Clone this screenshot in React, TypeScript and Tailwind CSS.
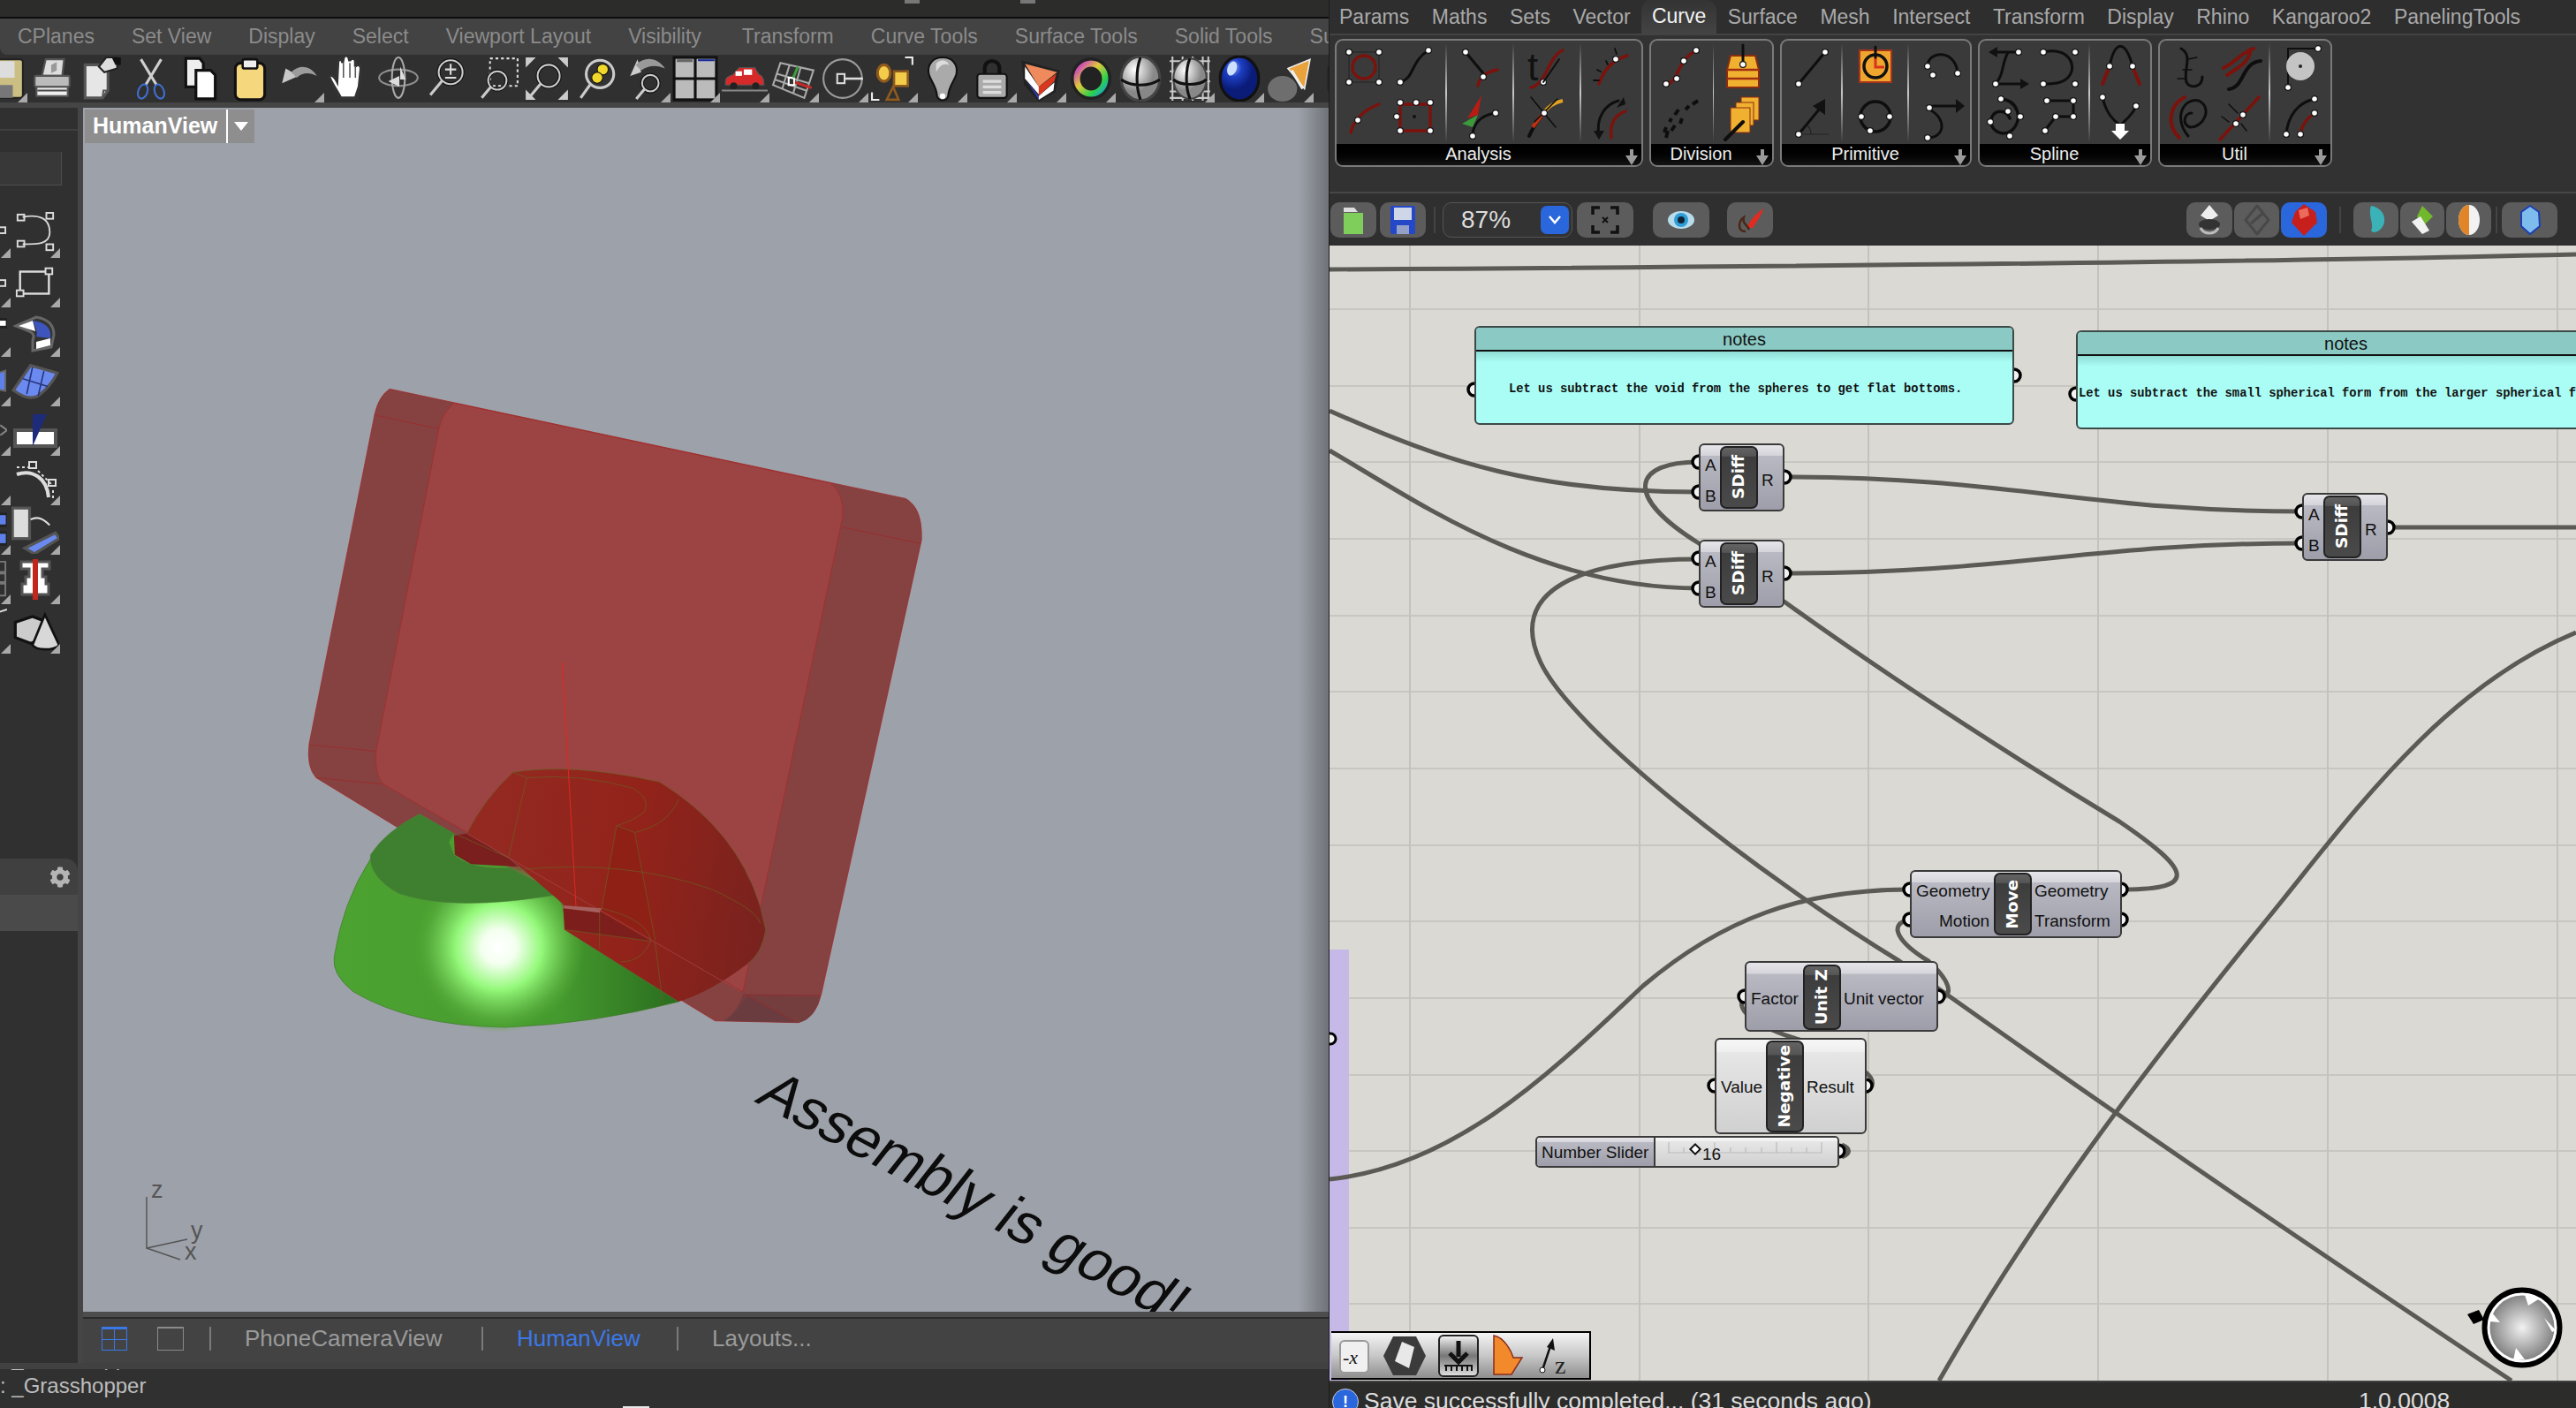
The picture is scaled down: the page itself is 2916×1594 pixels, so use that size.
import React from "react";
import { FaCog } from "react-icons/fa";

const sans = "font-['Liberation_Sans',Arial,sans-serif]";

const Tri = () => (
  <span className="absolute right-0 bottom-0 h-[11px] w-[11px] bg-[#a9a9a9] [clip-path:polygon(100%_0,100%_100%,0_100%)]" />
);

const S = ({ children, size = 52 }: { children: React.ReactNode; size?: number }) => (
  <svg width={size} height={size} viewBox="0 0 50 50" fill="none">{children}</svg>
);

const mag = (cx: number, cy: number, r = 11) => (
  <>
    <circle cx={cx} cy={cy} r={r} stroke="#111" strokeWidth="4" />
    <circle cx={cx} cy={cy} r={r} stroke="#ccc" strokeWidth="2" />
    <path d={`M${cx - r * 0.7} ${cy + r * 0.7} L${cx - r * 1.7} ${cy + r * 1.9}`} stroke="#ccc" strokeWidth="3" />
  </>
);

const toolbar: { i: React.ReactNode; t?: boolean }[] = [
  { t: true, i: <S><rect x="3" y="4" width="44" height="42" rx="3" fill="#cbbf84" stroke="#222" strokeWidth="2" /><rect x="10" y="6" width="28" height="18" fill="#ddd" /><rect x="12" y="32" width="24" height="14" fill="#777" /></S> },
  { i: <S><path d="M14 22 L18 4 H38 L36 22Z" fill="#ddd" stroke="#555" strokeWidth="2" /><rect x="6" y="22" width="38" height="12" rx="2" fill="#bbb" stroke="#555" strokeWidth="2" /><rect x="8" y="34" width="34" height="10" fill="#eee" stroke="#555" strokeWidth="2" /><path d="M9 38 H41" stroke="#444" strokeWidth="2" /><path d="M24 10 l6 -3 v9 l-6 3z" fill="#999" /></S> },
  { i: <S><path d="M7 10 H32 V38 L26 46 H7Z" fill="#e6e6e6" stroke="#555" strokeWidth="3" /><path d="M26 46 L27 38 H32" stroke="#555" strokeWidth="2" /><path d="M22 12 L30 2 H42 V14 L28 18Z" fill="#ddd" stroke="#222" strokeWidth="2" /><path d="M36 2 h10 v8 h-6z" fill="#111" /></S> },
  { i: <S><path d="M14 4 L31 32 M36 4 L19 32" stroke="#cfcfcf" strokeWidth="3" /><ellipse cx="16" cy="39" rx="5" ry="8" stroke="#3f6fd0" strokeWidth="2" transform="rotate(20 16 39)" /><ellipse cx="34" cy="39" rx="5" ry="8" stroke="#3f6fd0" strokeWidth="2" transform="rotate(-20 34 39)" /></S> },
  { i: <S><path d="M9 3 H24 L28 8 V34 H9Z" fill="#eee" stroke="#111" strokeWidth="3" /><path d="M20 16 H36 L41 21 V47 H20Z" fill="#fff" stroke="#111" strokeWidth="3" /></S> },
  { i: <S><rect x="9" y="8" width="32" height="40" rx="6" fill="#f5d77e" stroke="#111" strokeWidth="3" /><rect x="17" y="4" width="16" height="10" rx="2" fill="#eee" stroke="#111" strokeWidth="2.5" /></S> },
  { t: true, i: <S><path d="M6 30 L10 14 L24 22Z" fill="#c8c8c8" /><path d="M16 18 C26 8 38 12 44 22 C36 18 28 18 22 24Z" fill="#9c9c9c" /></S> },
  { i: <S><path d="M16 46 C12 38 6 30 4 24 C3 20 8 20 12 28 L13 8 C13 3 18 3 18 8 L19 3 C19 -1 25 -1 25 3 L26 6 C26 2 32 2 32 6 L32 12 C33 9 38 9 38 14 L36 34 L32 46Z" fill="#fff" stroke="#333" strokeWidth="3" /><path d="M19 8 V24 M26 8 V24 M32 12 V24" stroke="#555" strokeWidth="1.5" /></S> },
  { i: <S><ellipse cx="25" cy="24" rx="21" ry="9" stroke="#8f8f8f" strokeWidth="2" /><ellipse cx="25" cy="24" rx="7" ry="22" stroke="#aaa" strokeWidth="2" /><path d="M27 12 L33 26 H27Z" fill="#ddd" /><path d="M14 28 L26 22 V34Z" fill="#ddd" /></S> },
  { i: <S>{mag(28, 18, 13)}<path d="M22 15 H34 M28 9 V21 M22 24 H34" stroke="#ddd" strokeWidth="2" /></S> },
  { i: <S><rect x="17" y="3" width="30" height="30" stroke="#ddd" strokeWidth="2" strokeDasharray="3 3" />{mag(25, 27, 10)}</S> },
  { i: <S><path d="M2 2 H13 L2 13Z M48 2 H37 L48 13Z M2 48 H13 L2 37Z M48 48 H37 L48 37Z" fill="#ccc" />{mag(27, 22, 12)}</S> },
  { i: <S><circle cx="29" cy="20" r="15" stroke="#ccc" strokeWidth="3" fill="#333" /><circle cx="32" cy="15" r="6" fill="#f0d92a" stroke="#111" /><circle cx="26" cy="24" r="6" fill="#f0d92a" stroke="#111" /><path d="M18 32 L8 46" stroke="#ccc" strokeWidth="3" /></S> },
  { t: true, i: <S><path d="M8 22 L16 4 L20 18Z" fill="#ccc" /><path d="M14 10 C24 0 38 2 46 14 C38 10 28 10 20 16Z" fill="#999" />{mag(30, 30, 9)}</S> },
  { t: true, i: <S><rect x="2" y="2" width="46" height="46" fill="#bbb" stroke="#111" strokeWidth="3" /><path d="M25 2 V48 M2 25 H48" stroke="#111" strokeWidth="3" /><path d="M28 4 H46 V6 H28Z" fill="#1a2c9c" /><path d="M5 4 H22 V7 H5Z" fill="#666" /></S> },
  { t: true, i: <S><path d="M4 28 C4 24 8 22 12 21 L19 13 H36 L40 20 C44 22 46 24 46 32 H4Z" fill="#d62a2a" stroke="#555" /><rect x="24" y="15" width="9" height="6" fill="#fff" /><rect x="15" y="17" width="7" height="5" fill="#fff" /><circle cx="13" cy="33" r="4" fill="#222" /><circle cx="37" cy="33" r="4" fill="#222" /><path d="M0 38 H50" stroke="#888" strokeWidth="2" /></S> },
  { t: true, i: <S><path d="M10 8 L46 16 L36 46 L2 32Z M20 10 L12 36 M32 13 L24 41 M7 20 L41 30 M4 26 L38 38" stroke="#a9a9a9" strokeWidth="2" /><rect x="19" y="24" width="6" height="8" stroke="#fff" strokeWidth="2" /><path d="M24 24 L29 12" stroke="#3f9c3f" strokeWidth="3" /><path d="M26 29 L44 35" stroke="#c02a2a" strokeWidth="3" /></S> },
  { t: true, i: <S><circle cx="24" cy="25" r="21" stroke="#9a9a9a" strokeWidth="2" /><rect x="18" y="20" width="8" height="10" stroke="#ddd" strokeWidth="2" /><path d="M26 25 H46" stroke="#ddd" strokeWidth="2.5" /></S> },
  { t: true, i: <S><ellipse cx="15" cy="19" rx="7" ry="9" fill="#f3cd4a" stroke="#8f5a1e" strokeWidth="3" /><rect x="26" y="17" width="15" height="16" fill="#f3cd4a" stroke="#8f5a1e" strokeWidth="2.5" /><path d="M25 34 L31 48 H18Z" stroke="#8f5a1e" strokeWidth="2.5" /><path d="M38 2 H46 V10 M2 40 V48 H10" stroke="#eee" strokeWidth="2" /></S> },
  { t: true, i: <S><path d="M25 2 C14 2 8 10 10 20 C12 28 18 32 19 44 C21 50 29 50 31 44 C32 32 38 28 40 20 C42 10 36 2 25 2Z" fill="#aaa" stroke="#111" strokeWidth="2" /><path d="M18 9 C21 4 30 4 32 10 C26 8 22 10 18 18Z" fill="#ddd" /><circle cx="25" cy="44" r="3" fill="#fff" /></S> },
  { t: true, i: <S><path d="M17 20 V14 C17 3 33 3 33 14 V20" stroke="#111" strokeWidth="4" /><rect x="9" y="20" width="32" height="26" rx="3" fill="#aaa" stroke="#111" strokeWidth="2" /><path d="M15 28 H35 M15 34 H35 M15 40 H35" stroke="#ddd" strokeWidth="3" /></S> },
  { t: true, i: <S><path d="M3 5 L45 16 L40 40 L22 50 L6 32Z" fill="#222" /><path d="M7 9 L42 18 L22 34Z" fill="#ee8a5c" /><path d="M22 34 L41 20 L39 28 L22 44Z" fill="#d9381e" /><path d="M7 12 L22 34 V42 L7 25Z" fill="#fff" /><path d="M9 28 L22 44 V48Z" fill="#2a3dc0" /><path d="M22 44 L39 29 L38 38 L22 48Z" fill="#fff" /></S> },
  { t: true, i: <svg width="50" height="50" viewBox="0 0 50 50"><defs><linearGradient id="w1" x1="0" y1="0" x2="1" y2="1"><stop offset="0" stopColor="#c528d8" /><stop offset=".4" stopColor="#e2c83c" /><stop offset=".75" stopColor="#2cd24a" /><stop offset="1" stopColor="#18a0d8" /></linearGradient></defs><ellipse cx="25" cy="25" rx="23" ry="24" fill="#222" /><ellipse cx="25" cy="25" rx="16" ry="17" fill="none" stroke="url(#w1)" strokeWidth="7" /></svg> },
  { i: <S><defs><radialGradient id="sph" cx=".35" cy=".3"><stop offset="0" stopColor="#fff" /><stop offset="1" stopColor="#888" /></radialGradient></defs><ellipse cx="25" cy="25" rx="21" ry="24" fill="url(#sph)" stroke="#444" strokeWidth="3" /><path d="M4 26 C15 34 35 34 46 26 M25 2 C20 15 20 35 25 48" stroke="#111" strokeWidth="3" /></S> },
  { t: true, i: <S><path d="M3 6 H47 M3 17 H47 M3 28 H47 M3 39 H47 M3 46 H47 M6 1 V49 M17 1 V49 M28 1 V49 M39 1 V49 M45 1 V49" stroke="#c9c9c9" strokeWidth="2" /><ellipse cx="25" cy="25" rx="18" ry="22" fill="url(#sph)" stroke="#444" strokeWidth="2" /><path d="M7 26 C15 33 35 33 43 26 M25 3 C20 15 20 35 25 47" stroke="#111" strokeWidth="3" /></S> },
  { t: true, i: <S><defs><radialGradient id="bsph" cx=".35" cy=".25"><stop offset="0" stopColor="#8fb0ff" /><stop offset=".4" stopColor="#1e3fc4" /><stop offset="1" stopColor="#0a1c78" /></radialGradient></defs><ellipse cx="25" cy="25" rx="21" ry="24" fill="url(#bsph)" stroke="#111" strokeWidth="3" /><ellipse cx="17" cy="14" rx="5" ry="8" fill="#cfe0ff" transform="rotate(20 17 14)" /></S> },
  { t: true, i: <S><path d="M24 14 L48 4 L42 36Z" fill="#e9a33c" stroke="#eee" strokeWidth="1.5" /><path d="M28 16 L40 36" stroke="#eee" strokeWidth="3" /><ellipse cx="18" cy="36" rx="16" ry="14" fill="#bbb" opacity=".45" /></S> },
  { i: <S><rect x="14" y="10" width="26" height="30" rx="4" fill="#a9803c" stroke="#222" strokeWidth="2" /><path d="M18 18 H36 M18 30 H36" stroke="#eadba8" strokeWidth="3" /></S> },
];

const Row = ({ children }: { children: React.ReactNode }) => (
  <div className="relative flex h-[56px] w-[56px] items-center justify-center">{children}<Tri /></div>
);

const sideRight: React.ReactNode[] = [
  <S size={48}><path d="M10 6 C30 2 42 8 42 24 C42 38 28 38 10 38" stroke="#d6d6d6" strokeWidth="2" /><rect x="4" y="3" width="8" height="7" stroke="#ddd" strokeWidth="2" /><rect x="38" y="1" width="8" height="7" stroke="#ddd" strokeWidth="2" /><rect x="4" y="34" width="8" height="7" stroke="#ddd" strokeWidth="2" /><rect x="38" y="38" width="8" height="7" stroke="#ddd" strokeWidth="2" /></S>,
  <S size={48}><rect x="7" y="12" width="34" height="26" stroke="#ddd" strokeWidth="2.5" /><rect x="37" y="8" width="8" height="7" stroke="#ddd" strokeWidth="2" fill="#303030" /><rect x="3" y="34" width="8" height="7" stroke="#ddd" strokeWidth="2" fill="#303030" /></S>,
  <S size={50}><path d="M3 18 L26 8 C38 10 46 16 46 28 L43 42 L22 46 L22 34 C26 26 20 24 3 18Z" fill="#333" stroke="#666" strokeWidth="3" /><path d="M6 18 L22 12 L25 24Z" fill="#fff" /><path d="M22 12 C36 14 44 20 42 32 L26 30 C28 26 26 22 22 12Z" fill="#3d55bd" /><path d="M26 36 L42 32 L42 40 L26 44Z" fill="#fff" /></S>,
  <S size={54}><path d="M2 34 L20 8 L48 16 C42 28 36 34 28 40 C20 44 10 40 2 34Z" fill="#6b8af0" stroke="#555" strokeWidth="3" /><path d="M12 22 L38 30 M22 10 L16 38 M34 14 L28 40" stroke="#26347a" strokeWidth="1.5" /></S>,
  <S size={50}><rect x="2" y="24" width="46" height="18" fill="#fff" stroke="#555" strokeWidth="4" /><path d="M22 6 H38 L22 42Z" fill="#1d2c7a" /></S>,
  <S size={50}><path d="M4 18 C22 12 38 22 40 44" stroke="#ddd" strokeWidth="4" /><path d="M4 10 H20 M28 14 L44 30 M45 36 V48" stroke="#ddd" strokeWidth="2" strokeDasharray="3 3" /><rect x="18" y="4" width="8" height="7" stroke="#ddd" strokeWidth="2" /><rect x="40" y="24" width="8" height="7" stroke="#ddd" strokeWidth="2" /></S>,
  <S size={54}><rect x="1" y="2" width="18" height="32" fill="#ddd" stroke="#555" strokeWidth="3" /><path d="M20 14 C28 10 34 14 40 20" stroke="#ddd" strokeWidth="2" /><path d="M14 44 L46 28 L50 34 L24 50Z" fill="#6b8af0" stroke="#555" strokeWidth="3" /></S>,
  <S size={50}><path d="M9 5 H41 V13 H33 V22 H37 V30 H40 V42 H10 V30 H14 V22 H18 V13 H9Z" fill="#fff" stroke="#555" strokeWidth="3" /><rect x="22" y="2" width="6" height="46" fill="#c0281e" /></S>,
  <S size={54}><path d="M4 18 L22 12 L38 18 V34 L20 40 L4 34Z" fill="#ccc" stroke="#111" strokeWidth="3" /><path d="M35 10 L50 42 C44 48 26 48 22 42Z" fill="#d8d8d8" stroke="#111" strokeWidth="2.5" /></S>,
];
const sideLeft: React.ReactNode[] = [
  <S size={48}><rect x="40" y="18" width="8" height="7" stroke="#ddd" strokeWidth="2" /></S>,
  <S size={48}><rect x="40" y="22" width="8" height="7" stroke="#ddd" strokeWidth="2" /></S>,
  <S size={48}><rect x="34" y="10" width="16" height="9" fill="#fff" stroke="#222" strokeWidth="3" /></S>,
  <S size={48}><path d="M36 16 L48 12 V36 L36 34Z" fill="#5e80ea" stroke="#666" strokeWidth="2" /></S>,
  <S size={48}><path d="M42 18 L50 24 L42 30" stroke="#888" strokeWidth="2" /></S>,
  <S size={48}></S>,
  <S size={48}><rect x="36" y="6" width="14" height="14" fill="#5e80ea" stroke="#222" strokeWidth="3" /><rect x="36" y="28" width="14" height="14" fill="#5e80ea" stroke="#222" strokeWidth="3" /></S>,
  <S size={48}><path d="M38 4 H48 V16 H38Z M38 18 H48 V28 H38Z M38 30 H48 V44 H38Z" stroke="#777" strokeWidth="2" /></S>,
  <S size={48}><path d="M38 6 L50 2" stroke="#ddd" strokeWidth="2" /></S>,
];

const G = ({ children }: { children: React.ReactNode }) => (
  <div className="flex h-[55px] w-[58px] items-center justify-center">
    <svg width="56" height="56" viewBox="0 0 56 56" fill="none">{children}</svg>
  </div>
);
const d = (x: number, y: number) => <circle cx={x} cy={y} r="3.4" fill="#fff" stroke="#111" strokeWidth="1.2" />;
const K = ({ p, w = 3 }: { p: string; w?: number }) => <path d={p} stroke="#0e0e0e" strokeWidth={w} strokeLinecap="round" />;
const R = ({ p, w = 3.4 }: { p: string; w?: number }) => <path d={p} stroke="#7c120c" strokeWidth={w} strokeLinecap="round" />;

const Sep = () => <div className="h-[112px] w-[2px] self-center bg-linear-to-b from-transparent via-[#c8c8c8] to-transparent" />;

const Sec = ({ w, items }: { w: string; items: React.ReactNode[] }) => (
  <div className={`${w} flex flex-wrap content-center justify-center`}>
    {items.map((it, i) => <G key={i}>{it}</G>)}
  </div>
);

const Group = ({ w, label, children }: { w: string; label: string; children: React.ReactNode }) => (
  <div className={`${w} relative flex h-[145px] flex-col overflow-hidden rounded-[9px] border-2 border-[#7a7a7a] bg-[#3a3a3a]`}>
    <div className="flex h-[117px] items-stretch">{children}</div>
    <div className="relative flex flex-1 items-center justify-center bg-linear-to-b from-[#000] to-[#151515] pb-[3px] pr-[24px] text-[20px] leading-none text-[#eee]">
      {label}
      <span className="absolute right-[4px] top-[6px] text-[#888]">
        <svg width="14" height="18" viewBox="0 0 14 18"><path d="M5 0 H9 V7 H14 L7 18 L0 7 H5Z" fill="#9a9a9a" /></svg>
      </span>
    </div>
  </div>
);

const Btn = ({ w, blue, children }: { w: string; blue?: boolean; children: React.ReactNode }) => (
  <div className={`${w} flex h-[40px] items-center justify-center rounded-[10px] ${blue ? "bg-[#2a66dc]" : "bg-[#5c5c5c]"}`}>{children}</div>
);

const Cap = ({ text, cls }: { text: string; cls: string }) => (
  <div className={`absolute flex w-[43px] items-center justify-center rounded-[7px] border-2 border-[#222] bg-[linear-gradient(180deg,#636363_0%,#555_14%,#3d3d3d_15%,#4a4a4a_100%)] ${cls}`}>
    <span className="rotate-180 font-['DejaVu_Sans',sans-serif] text-[18.5px] font-bold leading-none text-white [writing-mode:vertical-rl]">{text}</span>
  </div>
);

const nodeBg = "bg-[linear-gradient(180deg,#e6e6ea_0%,#d4d4da_16%,#b9b9c3_17%,#9e9eaa_100%)]";
const lightBg = "bg-[linear-gradient(180deg,#f6f6f6_0%,#efefef_13%,#e6e6e6_14%,#d0d0d0_100%)]";

const Label = ({ cls, children }: { cls: string; children: React.ReactNode }) => (
  <span className={`absolute whitespace-nowrap text-[19px] leading-none text-[#111] ${cls}`}>{children}</span>
);

const SDiffNode = ({ pos }: { pos: string }) => (
  <div className={`absolute h-[77px] w-[97px] rounded-[6px] border-2 border-[#3a3a3a] ${nodeBg} ${pos}`}>
    <Cap text="SDiff" cls="left-[22px] top-[1px] h-[71px]" />
    <Label cls="left-[5px] top-[13px]">A</Label>
    <Label cls="left-[5px] top-[48px]">B</Label>
    <Label cls="left-[69px] top-[30px]">R</Label>
  </div>
);

const Note = ({ pos, text, tx }: { pos: string; text: string; tx: string }) => (
  <div className={`absolute flex h-[112px] flex-col overflow-hidden rounded-[6px] border-2 border-[#3c4a48] bg-[#aafdf5] ${pos}`}>
    <div className="flex h-[27px] shrink-0 items-center justify-center border-b-2 border-[#111] bg-[#8bc9c4] text-[20px] leading-none text-[#111]">notes</div>
    <div className="h-[12px] shrink-0 bg-linear-to-b from-[#8fdcd5] to-[#aafdf5]" />
    <div className={`whitespace-nowrap font-['Liberation_Mono',monospace] text-[13.8px] font-bold leading-none text-[#111] ${tx}`}>{text}</div>
  </div>
);

const grips: [number, number][] = [
  [1669, 441], [2280, 425], [2350, 446], [1923, 523], [1923, 557], [2020, 540], [1923, 632], [1923, 666], [2020, 649],
  [2606, 579], [2606, 615], [2703, 597], [2162, 1007], [2162, 1041], [2401, 1007], [2401, 1041], [1975, 1128], [2194, 1128],
  [1941, 1229], [2112, 1229], [2081, 1303],
];

const Wires = () => (
  <svg className="absolute inset-0" width="1411" height="1285" viewBox="1505 278 1411 1285" fill="none">
    <path d="M1505 263H2916M1505 350H2916M1505 437H2916M1505 523H2916M1505 610H2916M1505 697H2916M1505 783H2916M1505 870H2916M1505 957H2916M1505 1043H2916M1505 1130H2916M1505 1217H2916M1505 1303H2916M1505 1390H2916M1505 1476H2916" stroke="#c8c6c0" strokeWidth="2" />
    <path d="M1596 278V1563M1856 278V1563M2115 278V1563M2375 278V1563M2635 278V1563M2895 278V1563" stroke="#c4c2bc" strokeWidth="2" />
  </svg>
);

const Cables = () => (
  <svg className="absolute inset-0" width="1411" height="1285" viewBox="1505 278 1411 1285" fill="none">
    <g stroke="#5b5a55" strokeWidth="5">
      <path d="M1505 305 C2000 302 2500 298 2916 288" />
      <path d="M1505 465 C1640 525 1740 557 1923 557" />
      <path d="M1505 510 C1600 565 1740 666 1923 666" />
      <path d="M1923 523 C1850 523 1835 560 1923 615 L2021 682 C2150 775 2300 870 2399 930 C2480 985 2490 1007 2404 1007" />
      <path d="M1923 633 C1785 633 1706 670 1744 750 C1781 828 1990 990 2150 1088 L2204 1126 C2400 1265 2620 1415 2843 1563" />
      <path d="M2020 540 C2280 540 2360 579 2606 579" />
      <path d="M2020 649 C2280 649 2360 615 2606 615" />
      <path d="M2703 597 C2780 597 2840 597 2916 597" />
      <path d="M1505 1335 C1650 1320 1760 1210 1860 1116 C1950 1040 2040 1007 2162 1007" />
      <path d="M2162 1041 C2135 1046 2150 1068 2183 1088 C2205 1108 2215 1128 2194 1130" />
      <path d="M1975 1128 C1960 1145 1995 1165 2040 1178" />
      <path d="M2112 1214 C2122 1222 2122 1232 2112 1236" />
      <path d="M2085 1296 C2095 1300 2095 1306 2085 1310" />
      <path d="M2195 1563 C2300 1380 2420 1220 2566 1041 C2654 934 2760 780 2916 716" />
    </g>
    {grips.map(([x, y], i) => <circle key={i} cx={x} cy={y} r="7" fill="#f2f2f2" stroke="#000" strokeWidth="3.5" />)}
  </svg>
);

const Model = () => (
  <svg className="absolute left-[226px] top-[298px]" width="760" height="760" viewBox="0 0 1568 1568" fill="none">
    <defs>
      <radialGradient id="hl" gradientUnits="userSpaceOnUse" cx="505" cy="1345" r="200">
        <stop offset="0" stopColor="#ffffff" />
        <stop offset=".2" stopColor="#f4fff0" />
        <stop offset=".5" stopColor="#94f97a" />
        <stop offset=".85" stopColor="#58ad3c" stopOpacity=".7" />
        <stop offset="1" stopColor="#4ea632" stopOpacity="0" />
      </radialGradient>
      <linearGradient id="gb" x1="0" y1="0" x2="1" y2="0">
        <stop offset="0" stopColor="#4da331" />
        <stop offset=".65" stopColor="#459a2e" />
        <stop offset="1" stopColor="#2a6d1f" />
      </linearGradient>
      <linearGradient id="rd" gradientUnits="userSpaceOnUse" x1="430" y1="1100" x2="1130" y2="1200">
        <stop offset="0" stopColor="#932a22" />
        <stop offset=".55" stopColor="#92231a" />
        <stop offset="1" stopColor="#7a221e" />
      </linearGradient>
    </defs>
    <path d="M250 42 L1455 298 Q1495 320 1492 395 L1258 1455 Q1245 1512 1205 1522 L1010 1518 L78 950 Q55 925 62 870 L215 100 Q225 58 250 42Z" fill="#854241" stroke="#a02626" strokeWidth="1.5" />
    <path d="M1075 1455 L1255 1458 Q1245 1512 1205 1522 L1030 1518 Q1060 1500 1075 1455Z" fill="#743e3f" />
    <path d="M1085 1458 L1200 1520 L1032 1518 Q1060 1500 1085 1458Z" fill="#6b3c3f" />
    <path d="M400 75 L1280 262 Q1310 285 1308 340 L1075 1450 L235 965 Q215 945 218 890 L365 135 Q372 100 400 75Z" fill="#9c4443" stroke="#a82a2a" strokeWidth="1.5" />
    <g stroke="#a02626" strokeWidth="1.5">
      <path d="M215 103 L365 135 M62 873 L218 888 M78 950 L232 965 M1308 365 L1490 403 M1075 1458 L1255 1458 M1085 1460 L1200 1520" />
    </g>
    <path d="M320 1035 L640 1225 L655 1255 L658 1305 L925 1473 Q730 1525 520 1533 Q300 1530 165 1450 Q115 1410 120 1370 Q140 1240 205 1140 Q240 1075 320 1035Z" fill="url(#gb)" stroke="#3f7a2c" strokeWidth="1.5" />
    <circle cx="505" cy="1345" r="200" fill="url(#hl)" />
    <path d="M320 1035 Q240 1075 205 1130 Q200 1180 270 1220 Q400 1265 650 1222 L530 1160 Q440 1165 400 1130 L388 1100 L400 1080Z" fill="#3e802f" stroke="#56803f" strokeWidth="1" />
    <path d="M430 1080 Q470 1000 538 937 Q680 915 880 960 Q1060 1070 1115 1250 L1128 1305 Q1120 1360 1085 1385 Q1000 1450 925 1473 L658 1305 L655 1245 L530 1138Z" fill="url(#rd)" />
    <path d="M400 1085 L430 1080 L527 1138 L550 1158 L440 1152 L402 1130Z" fill="#7a1e1e" />
    <path d="M655 1255 L740 1262 L860 1332 L660 1305Z" fill="#7c1f1c" />
    <path d="M655 1248 L745 1255 L740 1265 L655 1255Z" fill="#a5615f" />
    <path d="M780 1062 L822 1078 L870 1330 L745 1258Z" fill="#8f2016" />
    <g stroke="#6b5d22" strokeWidth="1.5">
      <path d="M430 1080 Q470 1000 538 937 Q680 915 880 960 Q1060 1070 1115 1250 L1128 1305 Q1120 1360 1085 1385" />
      <path d="M538 937 L570 950 L527 1138 M570 950 Q700 940 820 975 Q860 1000 845 1030 Q820 1050 780 1062 L745 1255 M780 1062 L822 1078 L870 1330 M822 1078 Q900 1060 925 1000" />
      <path d="M550 1165 Q800 1140 1000 1210 Q1110 1260 1115 1290 M400 1080 L530 1138 M660 1305 L860 1332 M745 1255 Q850 1280 860 1330 Q840 1380 790 1380 M740 1265 L740 1350 M870 1335 L888 1480" />
    </g>
    <path d="M430 1080 L1070 1450" stroke="#a84646" strokeWidth="1.5" />
    <path d="M653 680 L685 1250" stroke="#d92a22" strokeWidth="2.2" />
  </svg>
);

export default function App() {
  return (
    <div className={`flex h-[1594px] w-[2916px] overflow-hidden bg-[#303030] ${sans}`}>
      {/* Rhino window */}
      <div className="flex h-full w-[1504px] shrink-0 flex-col overflow-hidden">
        <div className="relative h-[21px] shrink-0 border-b-2 border-[#0d0d0d] bg-[#2c2c2b]">
          <span className="absolute left-[1024px] top-0 h-[4px] w-[17px] bg-[#777]" />
          <span className="absolute left-[1155px] top-0 h-[4px] w-[17px] bg-[#777]" />
        </div>
        <div className="flex h-[41px] shrink-0 items-center gap-[42px] whitespace-nowrap rounded-bl-[8px] bg-[#434343] pl-[20px] text-[23px] text-[#8b8b8b]">
          {["CPlanes", "Set View", "Display", "Select", "Viewport Layout", "Visibility"].map((t) => <span key={t}>{t}</span>)}
          <span className="ml-[4px]">Transform</span>
          {["Curve Tools", "Surface Tools", "Solid Tools", "Su"].map((t) => <span key={t}>{t}</span>)}
        </div>
        <div className="flex h-[54px] shrink-0 items-center bg-[#303030] pl-[4px]">
          <div className="-ml-[29px] flex">
            {toolbar.map((t, i) => (
              <div key={i} className="relative flex h-[54px] w-[56px] shrink-0 items-center justify-center">
                {t.i}
                {t.t && <Tri />}
              </div>
            ))}
          </div>
        </div>
        <div className="h-[6px] shrink-0 bg-[#454545]" />
        <div className="flex min-h-0 flex-1">
          <div className="flex w-[88px] shrink-0 flex-col overflow-hidden rounded-tr-[8px] bg-[#303030]">
            <div className="h-[26px] shrink-0 border-b-2 border-[#3f3f3f]" />
            <div className="mt-[24px] h-[38px] w-[70px] shrink-0 border-b border-r border-[#4d4d4d] bg-[#383838]" />
            <div className="-ml-[44px] mt-[26px] grid h-[512px] w-[112px] shrink-0 grid-cols-2 content-start">
              {sideLeft.map((ic, i) => (
                <React.Fragment key={i}>
                  <Row>{ic}</Row>
                  <Row>{sideRight[i]}</Row>
                </React.Fragment>
              ))}
            </div>
            <div className="mt-[224px] flex h-[41px] shrink-0 items-center justify-end rounded-tr-[14px] bg-[#404040] pr-[8px]">
              <FaCog className="text-[24px] text-[#b4b4b4]" />
            </div>
            <div className="h-[41px] shrink-0 bg-[#4a4a4a]" />
          </div>
          <div className="w-[6px] shrink-0 bg-[#454545]" />
          <div className="flex min-w-0 flex-1 flex-col">
            <div className="relative min-h-0 flex-1 overflow-hidden bg-[#9da1a9]">
              <div className="absolute left-[2px] top-[2px] flex h-[38px] text-[25px] font-bold text-white">
                <div className="flex w-[160px] items-center bg-[#8e8e8e] pl-[9px]">HumanView</div>
                <div className="flex w-[32px] items-center justify-center border-l-2 border-white bg-[#8e8e8e]">
                  <svg width="16" height="10" viewBox="0 0 16 10"><path d="M0 0H16L8 10Z" fill="#fff" /></svg>
                </div>
              </div>
              <Model />
              <div className="absolute left-[794px] top-[1080px] origin-top-left rotate-[28deg] skew-x-[-10deg] whitespace-nowrap text-[66px] leading-none text-[#0c0c0c]">Assembly is good!</div>
              <svg className="absolute left-[26px] top-[1208px]" width="120" height="110" viewBox="120 1330 120 110" fill="none">
                <path d="M166 1355V1413L212 1403M166 1413L204 1426" stroke="#555" strokeWidth="1.5" />
                <text x="171" y="1356" fontSize="27" fill="#555">z</text>
                <text x="216" y="1402" fontSize="27" fill="#555">y</text>
                <text x="209" y="1426" fontSize="27" fill="#555">x</text>
              </svg>
              <div className="absolute bottom-0 right-0 top-0 w-[34px] bg-linear-to-r from-transparent to-[#6f7278]" />
            </div>
            <div className="h-[6px] shrink-0 bg-[#4d4d4d]" />
            <div className="flex h-[52px] shrink-0 items-center border-t-2 border-[#2a2a2a] bg-[#434343] pb-[6px] text-[26px] text-[#9a9a9a]">
              <div className="ml-[21px] grid h-[27px] w-[29px] grid-cols-2 border border-[#3b78e7]">
                <span className="border-b border-r border-t-2 border-[#3b78e7]" />
                <span className="border-b border-t-2 border-[#3b78e7]" />
                <span className="border-r border-[#3b78e7]" />
                <span />
              </div>
              <div className="ml-[34px] h-[27px] w-[30px] border border-t-2 border-[#8a8a8a]" />
              <div className="ml-[29px] h-[27px] w-[2px] bg-[#7a7a7a]" />
              <span className="ml-[38px] w-[226px] whitespace-nowrap">PhoneCameraView</span>
              <div className="ml-[42px] h-[27px] w-[2px] bg-[#7a7a7a]" />
              <span className="ml-[38px] w-[141px] text-[#3b78e7]">HumanView</span>
              <div className="ml-[40px] h-[27px] w-[2px] bg-[#7a7a7a]" />
              <span className="ml-[38px]">Layouts...</span>
            </div>
          </div>
        </div>
        <div className="h-[7px] shrink-0 bg-[#414141]" />
        <div className="relative h-[44px] shrink-0 overflow-hidden bg-[#303030] text-[24px] leading-[31px] text-[#bdbdbd]">
          <div className="-mt-[28px] whitespace-pre">: _Grasshopper</div>
          <div className="whitespace-pre">: _Grasshopper</div>
          <span className="absolute bottom-0 left-[705px] h-[2px] w-[30px] bg-[#e8e8e8]" />
        </div>
      </div>

      {/* Grasshopper window */}
      <div className="flex h-full min-w-0 flex-1 flex-col overflow-hidden border-l border-[#1c1c1c] bg-[#333]">
        <div className="relative flex h-[40px] shrink-0 items-center gap-[25.5px] whitespace-nowrap border-b-2 border-[#434343] bg-[#2e2e2e] pl-[11px] text-[23px] text-[#a9a9a9]">
          {["Params", "Maths", "Sets", "Vector"].map((t) => <span key={t}>{t}</span>)}
          <span className="relative z-10 -mx-[13px] flex h-[40px] w-[85px] justify-center rounded-t-[14px] bg-linear-to-b from-[#333] to-[#444] pt-[2px] text-[#f2f2f2]">Curve</span>
          {["Surface", "Mesh", "Intersect", "Transform", "Display", "Rhino", "Kangaroo2", "PanelingTools"].map((t) => <span key={t}>{t}</span>)}
        </div>
        <div className="flex h-[177px] shrink-0 gap-[7px] bg-[#323232] pl-[6px] pt-[4px]">
          <Group w="w-[349px]" label="Analysis">
            <Sec w="w-[124px]" items={[
              <><rect x="10" y="10" width="34" height="34" stroke="#222" /><circle cx="27" cy="27" r="13" stroke="#7c120c" strokeWidth="3.4" />{d(10, 10)}{d(44, 10)}{d(10, 44)}{d(44, 44)}</>,
              <><K p="M10 44 C26 40 22 20 42 8" />{d(10, 44)}{d(42, 8)}</>,
              <><R p="M12 46 C16 30 28 20 44 14" />{d(20, 32)}</>,
              <><R p="M10 44 V14 H44 V44 H10" />{d(10, 12)}{d(28, 12)}{d(44, 12)}{d(10, 44)}{d(44, 44)}{d(6, 28)}<circle cx="26" cy="28" r="2" fill="#111" /></>,
            ]} />
            <Sep />
            <Sec w="w-[75px]" items={[
              <><K p="M12 10 L32 34" /><R p="M26 48 C28 38 36 32 48 30" />{d(12, 10)}{d(32, 38)}</>,
              <><path d="M30 4 L26 26 L14 30 Z" fill="#b81c12" /><path d="M8 36 L26 26 L20 40Z" fill="#3c9a3a" /><K p="M20 50 C20 36 30 26 46 24" />{d(46, 24)}{d(20, 50)}</>,
            ]} />
            <Sep />
            <Sec w="w-[75px]" items={[
              <><text x="6" y="42" fontSize="44" fontFamily="Liberation Sans" fill="#111">t</text><R p="M10 50 C28 46 30 14 46 8" />{d(24, 44)}<K p="M24 44 L42 18" w={2} /></>,
              <><K p="M8 50 C14 36 22 28 24 24" w={4} /><path d="M24 24 C30 16 36 12 46 10" stroke="#e4a020" strokeWidth="4" /><path d="M12 40 L24 24" stroke="#c03010" strokeWidth="4" /><K p="M10 6 L38 40 M40 8 L14 34" w={1.6} />{d(25, 24)}</>,
            ]} />
            <Sep />
            <Sec w="w-[69px]" items={[
              <><R p="M14 46 C20 28 32 18 46 14" /><K p="M22 20 L24 24 M32 6 L34 12 M12 30 L16 32 M8 42 H14" w={1.8} />{d(33, 18)}</>,
              <><K p="M14 50 C10 28 22 14 36 10" /><path d="M42 6 L44 14 L34 18Z" fill="#111" /><R p="M28 52 C26 36 32 26 44 22" /><path d="M8 44 H20 L14 54Z" fill="#111" /></>,
            ]} />
          </Group>
          <Group w="w-[141px]" label="Division">
            <Sec w="w-[70px]" items={[
              <><R p="M10 48 C26 40 22 20 44 8" />{d(10, 46)}{d(22, 40)}{d(30, 20)}{d(44, 8)}</>,
              <><path d="M8 46 L10 40 M14 34 L16 30 M20 26 L24 20 M26 36 L28 30 M32 20 L36 16 M40 14 L46 10 M16 44 L20 38" stroke="#0e0e0e" strokeWidth="4" /><path d="M10 52 L12 44" stroke="#0e0e0e" strokeWidth="4" /></>,
            ]} />
            <Sep />
            <Sec w="w-[66px]" items={[
              <><path d="M14 14 H42 L46 30 V50 H10 V30Z" fill="#f0b030" stroke="#8b2d10" strokeWidth="2" /><path d="M10 30 H46 M10 40 H46" stroke="#a03010" strokeWidth="2.5" /><K p="M28 2 V22" />{d(28, 24)}</>,
              <><rect x="26" y="6" width="20" height="26" fill="#f0b030" stroke="#8b2d10" /><rect x="20" y="12" width="20" height="26" fill="#f0b030" stroke="#8b2d10" /><rect x="14" y="18" width="22" height="28" fill="#f0b030" stroke="#8b2d10" /><K p="M8 54 L28 34" w={4} /></>,
            ]} />
          </Group>
          <Group w="w-[217px]" label="Primitive">
            <Sec w="w-[68px]" items={[
              <><K p="M14 46 L44 10" />{d(14, 46)}{d(44, 10)}</>,
              <><K p="M14 48 L42 14" /><path d="M44 8 L44 26 L30 16Z" fill="#111" /><path d="M14 48 H48 M28 48 C28 42 26 40 24 38" stroke="#222" strokeWidth="1.2" />{d(14, 48)}</>,
            ]} />
            <Sep />
            <Sec w="w-[75px]" items={[
              <><rect x="10" y="8" width="36" height="36" fill="#f0a52e" stroke="#a8341a" strokeWidth="2" /><circle cx="28" cy="26" r="13" stroke="#111" strokeWidth="3.5" /><path d="M28 16 V27 H38" stroke="#d8341a" strokeWidth="3" /><K p="M28 4 V16" /></>,
              <><circle cx="28" cy="28" r="17" stroke="#0e0e0e" strokeWidth="3.5" />{d(12, 28)}{d(44, 28)}{d(22, 44)}</>,
            ]} />
            <Sep />
            <Sec w="w-[70px]" items={[
              <><K p="M14 26 C14 8 46 6 48 34" />{d(14, 26)}{d(20, 36)}{d(48, 34)}</>,
              <><K p="M14 52 C34 52 36 30 16 20 M20 16 H52" />{d(14, 52)}{d(16, 18)}<path d="M46 8 L56 16 L46 24Z" fill="#111" /></>,
            ]} />
          </Group>
          <Group w="w-[197px]" label="Spline">
            <Sec w="w-[124px]" items={[
              <><K p="M12 10 H40 M28 10 C20 26 24 34 14 46 M14 46 H46" /><path d="M6 10 L16 4 V16Z M52 46 L42 40 V52Z" fill="#111" />{d(40, 10)}{d(14, 46)}</>,
              <><K p="M10 10 C38 4 48 24 40 36 C34 46 20 46 10 46" />{d(10, 10)}{d(46, 10)}{d(10, 46)}{d(46, 46)}</>,
              <><K p="M20 8 C40 10 44 30 34 42 C22 54 4 42 10 28 C14 20 26 20 30 30" w={3.4} />{d(20, 8)}{d(28, 22)}{d(42, 28)}{d(30, 50)}{d(8, 34)}</>,
              <><K p="M10 46 L24 28 H44 V10 H14" />{d(12, 44)}{d(24, 28)}{d(44, 28)}{d(44, 10)}{d(14, 10)}</>,
            ]} />
            <Sep />
            <Sec w="w-[69px]" items={[
              <><K p="M16 26 C22 -4 34 -4 42 26" /><R p="M16 26 L8 46 M42 26 L50 46" w={4} />{d(16, 26)}{d(42, 26)}</>,
              <><K p="M8 6 C12 24 20 32 28 38 C34 32 44 24 46 16" />{d(8, 6)}{d(46, 16)}<path d="M23 36 H33 V44 H38 L28 54 L18 44 H23Z" fill="#fff" /></>,
            ]} />
          </Group>
          <Group w="w-[197px]" label="Util">
            <Sec w="w-[124px]" items={[
              <><K p="M20 6 C34 14 22 30 26 44 C30 52 44 50 44 38" /><K p="M22 30 L32 30 M16 40 L24 40 M28 18 L38 16" w={1.4} /></>,
              <><R p="M10 28 C26 20 30 10 44 6 M14 36 C26 28 38 22 40 10" w={4} /><K p="M16 52 C34 50 30 22 52 20" w={4} /></>,
              <><K p="M28 50 C10 28 24 6 40 10 C56 18 46 40 30 40 C20 36 24 24 32 24" /><R p="M24 6 C8 14 2 36 18 52" w={4} /></>,
              <><R p="M6 54 L50 6" w={3.6} />{d(24, 36)}{d(32, 26)}<K p="M16 14 L26 24 M36 44 L30 36 M8 28 L16 34" w={1.5} /></>,
            ]} />
            <Sep />
            <Sec w="w-[69px]" items={[
              <><K p="M14 6 H44 M14 6 V48" w={2} /><circle cx="28" cy="26" r="16" fill="#c4c4c4" /><circle cx="28" cy="26" r="2" fill="#222" />{d(48, 6)}{d(14, 50)}</>,
              <><K p="M12 48 C14 26 26 12 44 8" /><R p="M28 48 C30 36 36 30 44 24" />{d(12, 48)}{d(28, 48)}{d(44, 8)}{d(44, 24)}</>,
            ]} />
          </Group>
        </div>
        <div className="h-[2px] shrink-0 bg-[#474747]" />
        <div className="flex h-[59px] shrink-0 items-center bg-[#2f2f2f] pl-[1px] pr-[21px]">
          <Btn w="w-[52px]"><svg width="30" height="36" viewBox="0 0 30 36"><path d="M4 4H16L20 9H4Z" fill="#ddd" /><path d="M4 10H26V34H4Z" fill="#7fce5c" /></svg></Btn>
          <div className="ml-[4px]"><Btn w="w-[52px]"><svg width="32" height="36" viewBox="0 0 32 36"><rect x="2" y="2" width="28" height="32" rx="2" fill="#2448c8" /><rect x="6" y="4" width="20" height="14" fill="#cfd6e8" /><rect x="9" y="24" width="14" height="10" fill="#93a0c8" /></svg></Btn></div>
          <div className="ml-[9px] h-[30px] w-[2px] bg-[#444]" />
          <div className="ml-[8px] flex h-[40px] w-[147px] items-center justify-between rounded-[10px] border border-[#555] bg-[#333] pl-[20px] pr-[3px] text-[28px] leading-none text-[#ddd]">
            87%
            <div className="flex h-[32px] w-[32px] items-center justify-center rounded-[7px] bg-[#2a66dc]">
              <svg width="16" height="12" viewBox="0 0 16 12" fill="none"><path d="M2 2L8 9L14 2" stroke="#fff" strokeWidth="2.5" /></svg>
            </div>
          </div>
          <div className="ml-[5px]"><Btn w="w-[64px]"><svg width="32" height="32" viewBox="0 0 32 32" fill="none"><path d="M2 10V2H10M22 2H30V10M2 22V30H10M22 30H30V22" stroke="#111" strokeWidth="3.5" /><path d="M13 13L19 19M19 13L13 19" stroke="#111" strokeWidth="2" /></svg></Btn></div>
          <div className="ml-[22px]"><Btn w="w-[64px]"><svg width="32" height="24" viewBox="0 0 32 24"><ellipse cx="16" cy="12" rx="15" ry="10" fill="#b8dcec" /><circle cx="16" cy="12" r="8" fill="#2f9ed8" /><circle cx="16" cy="12" r="4" fill="#123" /></svg></Btn></div>
          <div className="ml-[20px]"><Btn w="w-[52px]"><svg width="34" height="34" viewBox="0 0 34 34" fill="none"><path d="M32 4C24 10 16 18 14 26L20 26C24 20 30 12 32 4Z" fill="#e22b20" /><path d="M12 30C2 30 4 18 10 14C8 22 14 22 16 28" stroke="#4a2616" strokeWidth="2.5" /></svg></Btn></div>
          <div className="ml-auto"><Btn w="w-[52px]"><svg width="28" height="38" viewBox="0 0 28 38"><path d="M14 2L24 14L14 20L4 14Z" fill="#eee" /><ellipse cx="14" cy="24" rx="12" ry="6" fill="#333" /><path d="M4 28C8 36 20 36 24 28" stroke="#bbb" strokeWidth="3" fill="none" /></svg></Btn></div>
          <div className="ml-[2px]"><Btn w="w-[51px]"><svg width="30" height="36" viewBox="0 0 30 36" fill="none"><path d="M15 2L28 18L15 34L2 18Z" stroke="#484848" strokeWidth="3" strokeLinejoin="round" /><path d="M8 22L22 10" stroke="#484848" strokeWidth="3" /></svg></Btn></div>
          <div className="ml-[2px]"><Btn w="w-[52px]" blue><svg width="32" height="38" viewBox="0 0 32 38"><path d="M16 1L29 10L31 22L16 37L2 22L6 10Z" fill="#c7201c" /><path d="M10 8L20 5L22 14L12 18Z" fill="#ec6a5c" /></svg></Btn></div>
          <div className="mx-[14px] h-[30px] w-[2px] bg-[#444]" />
          <Btn w="w-[51px]"><svg width="28" height="36" viewBox="0 0 28 36"><path d="M8 2C20 4 26 14 22 24C18 32 10 34 8 30C12 22 4 14 8 2Z" fill="#3bb1b8" /></svg></Btn>
          <div className="ml-[2px]"><Btn w="w-[50px]"><svg width="32" height="36" viewBox="0 0 32 36"><path d="M16 2L28 14L16 26L10 14Z" fill="#72b82c" /><path d="M4 20L14 14L24 30L16 34Z" fill="#f2f2f2" /></svg></Btn></div>
          <div className="ml-[2px]"><Btn w="w-[51px]"><svg width="26" height="36" viewBox="0 0 26 36"><ellipse cx="13" cy="18" rx="12" ry="17" fill="#f2f2f2" /><path d="M13 1C6 1 1 9 1 18C1 27 6 35 13 35Z" fill="#e08528" /></svg></Btn></div>
          <div className="ml-[5px] mr-[5px] h-[30px] w-[2px] bg-[#444]" />
          <Btn w="w-[63px]"><svg width="24" height="34" viewBox="0 0 24 34"><path d="M12 1L22 8L23 24L12 33L2 24L2 8Z" fill="#7fbcee" stroke="#1d3fb0" strokeWidth="2" /></svg></Btn>
        </div>

        <div className={`relative min-h-0 flex-1 overflow-hidden bg-[#dbd9d3] ${sans}`}>
          <Wires />
          <div className="absolute left-0 top-[797px] h-[488px] w-[22px] bg-[#c6b9e8]" />
          <svg className="absolute left-0 top-[890px]" width="16" height="16" viewBox="0 0 16 16"><circle cx="1" cy="8" r="6" fill="#f2f2f2" stroke="#000" strokeWidth="3" /></svg>
          <Cables />
          <Note pos="left-[164px] top-[91px] w-[611px]" tx="mt-[24px] pl-[37px]" text="Let us subtract the void from the spheres to get flat bottoms." />
          <Note pos="left-[845px] top-[96px] w-[611px]" tx="mt-[24px] pl-[1px]" text="Let us subtract the small spherical form from the larger spherical form" />
          <SDiffNode pos="left-[418px] top-[224px]" />
          <SDiffNode pos="left-[418px] top-[333px]" />
          <SDiffNode pos="left-[1101px] top-[280px]" />

          <div className={`absolute left-[657px] top-[707px] h-[77px] w-[240px] rounded-[6px] border-2 border-[#3a3a3a] ${nodeBg}`}>
            <Cap text="Move" cls="left-[93px] top-[1px] h-[71px]" />
            <Label cls="left-[5px] top-[12px]">Geometry</Label>
            <Label cls="left-[31px] top-[46px]">Motion</Label>
            <Label cls="left-[139px] top-[12px]">Geometry</Label>
            <Label cls="left-[139px] top-[46px]">Transform</Label>
          </div>
          <div className={`absolute left-[470px] top-[810px] h-[80px] w-[219px] rounded-[6px] border-2 border-[#3a3a3a] ${nodeBg}`}>
            <Cap text="Unit Z" cls="left-[64px] top-[2px] h-[74px]" />
            <Label cls="left-[5px] top-[31px]">Factor</Label>
            <Label cls="left-[110px] top-[31px]">Unit vector</Label>
          </div>
          <div className={`absolute left-[436px] top-[897px] h-[109px] w-[172px] rounded-[6px] border-2 border-[#3a3a3a] ${lightBg}`}>
            <Cap text="Negative" cls="left-[56px] top-[1px] h-[104px]" />
            <Label cls="left-[5px] top-[44px]">Value</Label>
            <Label cls="left-[102px] top-[44px]">Result</Label>
          </div>
          <div className="absolute left-[233px] top-[1008px] flex h-[36px] w-[344px] overflow-hidden rounded-[5px] border-2 border-[#3a3a3a]">
            <div className={`flex w-[134px] items-center border-r-2 border-[#3a3a3a] pl-[5px] text-[19px] leading-none text-[#111] ${nodeBg}`}>Number Slider</div>
            <div className={`relative flex-1 ${lightBg}`}>
              <svg className="absolute left-[14px] top-[5px]" width="176" height="14" viewBox="0 0 176 14" fill="none">
                <path d="M0 12H175M1 0V12M18 6V12M36 6V12M53 0V12M71 6V12M88 6V12M106 6V12M88 6V12M123 0V12M140 6V12M157 6V12M174 0V12" stroke="#bbb" strokeWidth="1.2" />
              </svg>
              <span className="absolute left-[40px] top-[8px] h-[10px] w-[10px] rotate-45 border-2 border-[#111] bg-white" />
              <span className="absolute left-[53px] top-[9px] text-[19px] leading-none text-[#111]">16</span>
            </div>
          </div>

          <div className="absolute left-[2px] top-[1229px] flex h-[55px] w-[294px] items-center justify-around overflow-hidden border-2 border-l-0 border-black bg-linear-to-b from-[#f4f4f4] via-[#c8c8c8] to-[#8f8f8f] pr-[12px]">
            <svg width="38" height="48" viewBox="0 0 38 48"><rect x="3" y="7" width="32" height="36" rx="5" fill="#f0f0f0" stroke="#999" strokeWidth="2" /><text x="6" y="33" fontSize="22" fontFamily="Liberation Serif" fontStyle="italic" fill="#111">-x</text></svg>
            <svg width="50" height="48" viewBox="0 0 50 48"><path d="M12 2H38L49 24L38 46H12L1 24Z" fill="#3b3b3b" /><path d="M22 8L36 14L30 38L14 30Z" fill="#e8e8e8" /></svg>
            <div className="flex h-[48px] w-[46px] items-center justify-center rounded-[6px] border-2 border-[#222] bg-linear-to-b from-[#f0f0f0] via-[#777] to-[#ddd]">
              <svg width="36" height="38" viewBox="0 0 36 38" fill="none"><path d="M18 2V20M8 16L18 26L28 16" stroke="#111" strokeWidth="5" /><path d="M2 30H34M4 30V36M10 30V36M16 30V36M22 30V36M28 30V36M33 30V36" stroke="#111" strokeWidth="2" /></svg>
            </div>
            <svg width="40" height="50" viewBox="0 0 40 50"><path d="M4 2C16 4 24 20 26 27H36L24 46H4Z" fill="#f28a2c" stroke="#8b2b1e" strokeWidth="1.5" /></svg>
            <svg width="40" height="48" viewBox="0 0 40 48" fill="none"><path d="M6 40L16 10" stroke="#111" strokeWidth="2.5" /><path d="M18 4L20 18L11 14Z" fill="#111" /><circle cx="6" cy="40" r="3" fill="#fff" stroke="#111" /><text x="20" y="44" fontSize="28" fontFamily="Liberation Serif" fill="#222">z</text></svg>
          </div>

          <svg className="absolute left-[1288px] top-[1170px]" width="120" height="110" viewBox="2793 1448 120 110" fill="none">
            <defs>
              <radialGradient id="knob"><stop offset="0" stopColor="#f2f2f2" /><stop offset="1" stopColor="#7f7f7f" /></radialGradient>
            </defs>
            <path d="M2793 1488L2806 1483L2812 1494L2800 1499Z" fill="#000" />
            <circle cx="2855" cy="1503" r="42" stroke="#000" strokeWidth="7" />
            <circle cx="2855" cy="1503" r="38" fill="url(#knob)" stroke="#fff" strokeWidth="3" />
            <path d="M2858 1466L2875 1470L2862 1478Z M2889 1508L2880 1492L2893 1506Z M2845 1540L2848 1526L2858 1539Z M2817 1496L2830 1497L2820 1485Z" fill="#fff" />
          </svg>
        </div>

        <div className="relative flex h-[31px] shrink-0 items-start overflow-hidden border-t-2 border-[#3f3f3f] bg-[#2c2c2b] text-[26.5px] leading-none text-[#ddd]">
          <span className="ml-[3px] mt-[7px] flex h-[30px] w-[30px] items-center justify-center rounded-full border border-[#ccd] bg-[#2a66dc] text-[18px] font-bold text-white">!</span>
          <span className="ml-[6px] mt-[8px] whitespace-nowrap">Save successfully completed... (31 seconds ago)</span>
          <span className="absolute left-[1165px] top-[8px]">1.0.0008</span>
        </div>
      </div>
    </div>
  );
}
